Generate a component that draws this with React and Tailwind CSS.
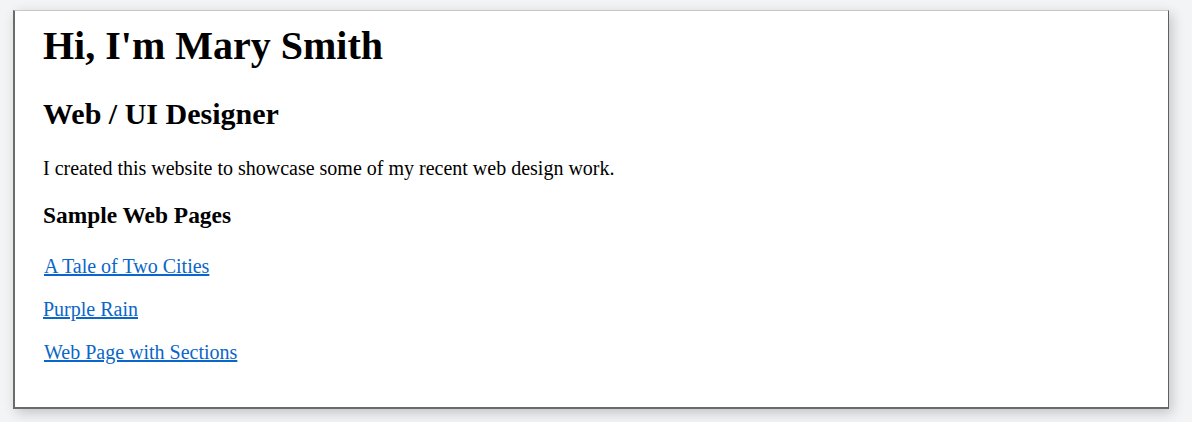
export default function App() {
  return (
    <div className="w-[1192px] h-[422px] bg-[#f3f4f5] pt-[10px] pl-[13px] overflow-hidden">
      <div
        className="w-[1156px] h-[399px] bg-white border-t border-t-[#c8c8c8] border-l-2 border-l-[#6b6b6b] border-r border-r-[#5f5f5f] border-b-2 border-b-[#6b6b6b] shadow-[3px_4px_12px_rgba(0,0,0,0.2)] pl-[28px] pt-[12px] text-black"
        style={{ fontFamily: '"Liberation Serif", "Times New Roman", serif' }}
      >
        <h1 className="text-[40px] leading-[46px] font-bold">Hi, I'm Mary Smith</h1>
        <h2 className="mt-[28px] text-[30px] leading-[34.5px] font-bold">Web / UI Designer</h2>
        <p className="mt-[25px] text-[20px] leading-[23px]">
          I created this website to showcase some of my recent web design work.
        </p>
        <h3 className="mt-[22.4px] text-[23.4px] leading-[27px] font-bold">Sample Web Pages</h3>
        <p className="mt-[26.4px] text-[20px] leading-[23px] pl-[1px]">
          <a href="#" className="text-[#0a66c8] underline">A Tale of Two Cities</a>
        </p>
        <p className="mt-[20px] text-[20px] leading-[23px]">
          <a href="#" className="text-[#0a66c8] underline">Purple Rain</a>
        </p>
        <p className="mt-[20px] text-[20px] leading-[23px] pl-[1px]">
          <a href="#" className="text-[#0a66c8] underline">Web Page with Sections</a>
        </p>
      </div>
    </div>
  );
}
